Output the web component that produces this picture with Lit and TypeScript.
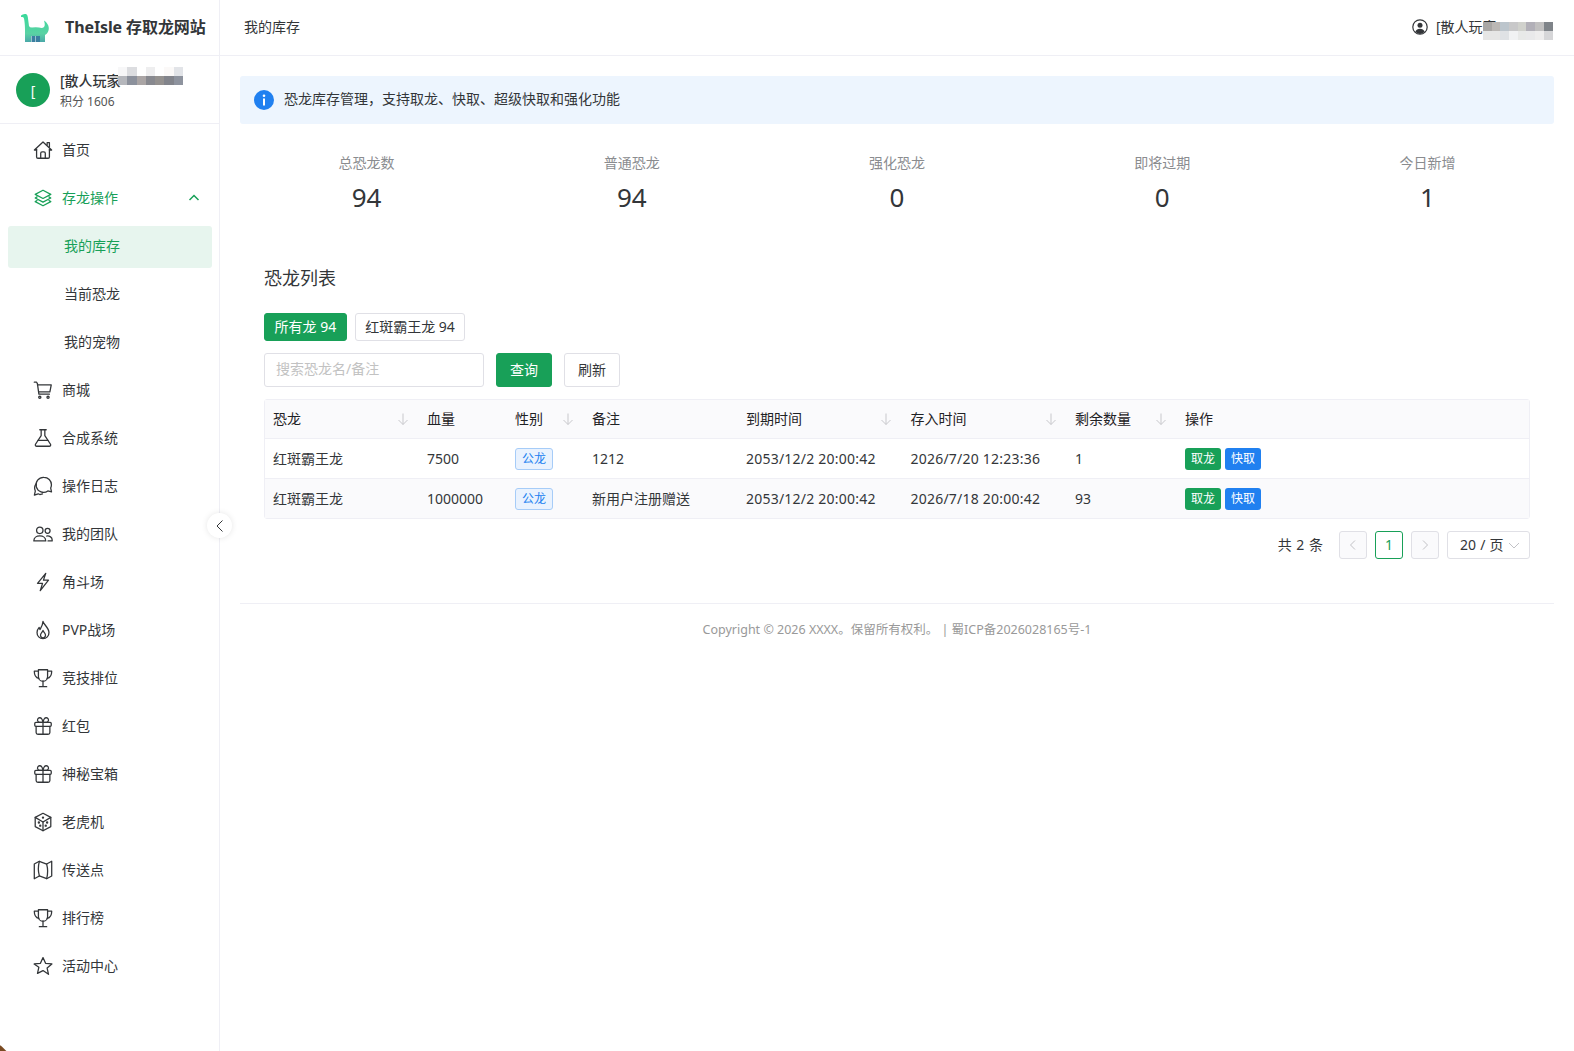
import { html, svg, css, LitElement } from "lit";
import { customElement } from "lit/decorators.js";
import { classMap } from "lit/directives/class-map.js";

const icons: Record<string, unknown> = {
  home: svg`<path d="M5 12H2.6L12 3.2l9.4 8.8H19"/><path d="M5 11v8.500A1.500 1.500 0 0 0 6.500 21h11a1.500 1.500 0 0 0 1.500-1.500V11"/><path d="M9.500 21v-5.500a1.500 1.500 0 0 1 1.500-1.500h2a1.500 1.500 0 0 1 1.500 1.500V21"/><path d="M16.500 6.500V4H19v4.800"/>`,
  layers: svg`<path d="M12 3.500 20.500 8 12 12.500 3.500 8Z"/><path d="M5.500 10.800 3.500 12l8.500 4.500 8.500-4.500-2-1.200"/><path d="M5.500 14.800 3.500 16l8.500 4.500 8.500-4.500-2-1.200"/>`,
  cart: svg`<path d="M2.500 3.500H5l.9 1.500L7.500 16.500h11.500"/><path d="M6 6.500h15l-1.500 7.500H7.200"/><circle cx="8.500" cy="20" r="1.200"/><circle cx="17.500" cy="20" r="1.200"/>`,
  flask: svg`<path d="M8.500 3h7"/><path d="M10 3v6.500L3.800 18.800A1.500 1.500 0 0 0 5.100 21h13.800a1.500 1.500 0 0 0 1.300-2.200L14 9.500V3"/><path d="M6.500 14.500h11"/>`,
  chat: svg`<path d="M13 2.500a8.200 8.200 0 0 1 8.200 8.200c0 1.300-.3 2.500-.8 3.600l.9 4-4-.9A8.200 8.200 0 1 1 13 2.500Z"/><path d="M4.700 9.500C3 11.500 2.500 15 3.600 17.500l-1 4.500 4.200-1.500 1.700.8 3-.8"/>`,
  people: svg`<circle cx="8.500" cy="8" r="3.500"/><circle cx="17" cy="8.500" r="2.700"/><path d="M2 19.500c0-3.500 3-5.500 6.500-5.500s6.500 2 6.500 5.500Z"/><path d="M16 14.200c3.300-.3 6 1.400 6 4.300v1h-4.500"/>`,
  flash: svg`<path d="M15 2.500 6 13.500h5.500L9 21.500l9-11.500h-5.500Z"/>`,
  flame: svg`<path d="M12 2.500c.5 3.500 6.500 7 6.500 12.200A6.500 6.500 0 0 1 12 21.500a6.500 6.500 0 0 1-6.500-6.800c0-2.500 1-4 2.300-5.500l.9 2.300c1-2 3-4.500 3.300-9Z"/><path d="M12 12.500c.5 1.800 2.700 3 2.700 5A2.700 2.700 0 0 1 12 20.500a2.700 2.700 0 0 1-2.700-3c0-2 2.200-3.200 2.700-5Z"/>`,
  trophy: svg`<path d="M7 3h10v7.500a5 5 0 0 1-10 0Z"/><path d="M7 4.500H2.500c0 4 1.500 7 5 8"/><path d="M17 4.500h4.500c0 4-1.500 7-5 8"/><path d="M12 15.500V21"/><path d="M8 21.500h8"/>`,
  gift: svg`<rect x="3" y="8" width="18" height="4.500" rx="1.200"/><path d="M4.500 12.500V19a2 2 0 0 0 2 2h11a2 2 0 0 0 2-2v-6.500"/><path d="M12 8v13"/><path d="M12 8H8.500a2.500 2.500 0 1 1 2-4c.8 1 1.500 4 1.500 4Zm0 0h3.500a2.500 2.500 0 1 0-2-4c-.8 1-1.500 4-1.500 4Z"/>`,
  cube: svg`<path d="M12 2.500 20.500 7v10L12 21.500 3.500 17V7Z"/><path d="M3.500 7 12 12l8.500-5"/><path d="M12 12v9.500"/><circle cx="12" cy="7.200" r=".6"/><circle cx="7.500" cy="12.500" r=".6"/><circle cx="9" cy="16" r=".6"/><circle cx="16.500" cy="12.500" r=".6"/><circle cx="15" cy="16" r=".6"/>`,
  map: svg`<path d="M2.500 5.500 8 2.500l8 3 5.500-3v16L16 21.500l-8-3-5.500 3Z"/><path d="M8 2.500c-1.200 4.500-1.200 11.500 0 16"/><path d="M16 5.500c1.200 4.500 1.200 11.500 0 16"/>`,
  star: svg`<path d="M12 2.800l2.800 6.300 6.900.7-5.200 4.500 1.500 6.800L12 17l-6 3.100 1.500-6.800L2.300 9.800l6.900-.7Z"/>`,
};

type MenuItem = { label: string; icon?: string; active?: boolean; open?: boolean; sub?: boolean; current?: boolean };

const menu: MenuItem[] = [
  { label: "首页", icon: "home" },
  { label: "存龙操作", icon: "layers", active: true, open: true },
  { label: "我的库存", sub: true, current: true },
  { label: "当前恐龙", sub: true },
  { label: "我的宠物", sub: true },
  { label: "商城", icon: "cart" },
  { label: "合成系统", icon: "flask" },
  { label: "操作日志", icon: "chat" },
  { label: "我的团队", icon: "people" },
  { label: "角斗场", icon: "flash" },
  { label: "PVP战场", icon: "flame" },
  { label: "竞技排位", icon: "trophy" },
  { label: "红包", icon: "gift" },
  { label: "神秘宝箱", icon: "gift" },
  { label: "老虎机", icon: "cube" },
  { label: "传送点", icon: "map" },
  { label: "排行榜", icon: "trophy" },
  { label: "活动中心", icon: "star" },
];

const stats = [
  ["总恐龙数", "94"],
  ["普通恐龙", "94"],
  ["强化恐龙", "0"],
  ["即将过期", "0"],
  ["今日新增", "1"],
];

const columns = [
  { label: "恐龙", sort: true },
  { label: "血量" },
  { label: "性别", sort: true },
  { label: "备注" },
  { label: "到期时间", sort: true },
  { label: "存入时间", sort: true },
  { label: "剩余数量", sort: true },
  { label: "操作" },
];

const rows = [
  ["红斑霸王龙", "7500", "1212", "2053/12/2 20:00:42", "2026/7/20 12:23:36", "1"],
  ["红斑霸王龙", "1000000", "新用户注册赠送", "2053/12/2 20:00:42", "2026/7/18 20:00:42", "93"],
];

// pixelated name blur, two rows of blocks
const blurSide = [
  ["#f7f7f8", "#dcdde0", "#ffffff", "#eeeeef", "#ffffff", "#fbf9f8", "#e2e4e8"],
  ["#b5b7bc", "#8c919c", "#aaa5a5", "#88898f", "#94918f", "#82848b", "#8e939e"],
];
const blurTop = [
  ["#a9a7a5", "#bbb8b5", "#bcc5cc", "#c8c8c9", "#d0d1cc", "#b2b0b8", "#c1c0c0", "#7f8489"],
  ["#e6e6e5", "#e6e6e5", "#dfe2e5", "#f1f2f3", "#e8e9e8", "#e9e9ea", "#eeeded", "#d6d6d8"],
];

@customElement("app-root")
export class AppRoot extends LitElement {
  static styles = css`
    :host {
      display: block;
      height: 1051px;
      overflow: hidden;
      position: relative;
      background: #fff;
      color: #333639;
      font-family: "Noto Sans", "Noto Sans CJK SC", sans-serif;
      font-size: 14px;
      line-height: 1.5;
    }
    .layout {
      display: flex;
      height: 100%;
    }
    .side {
      width: 219px;
      flex: none;
      border-right: 1px solid #efeff5;
      position: relative;
    }
    .brand {
      height: 56px;
      box-sizing: border-box;
      border-bottom: 1px solid #efeff5;
      display: flex;
      align-items: center;
      padding-left: 20px;
      gap: 15px;
    }
    .brand svg {
      width: 30px;
      height: 30px;
      flex: none;
    }
    .brand b {
      font-size: 16px;
      font-weight: 700;
      white-space: nowrap;
      letter-spacing: -0.1px;
      padding-bottom: 2px;
    }
    .user {
      height: 67px;
      box-sizing: border-box;
      border-bottom: 1px solid #efeff5;
      display: flex;
      align-items: center;
      padding-left: 16px;
      gap: 10px;
      margin-top: 1px;
    }
    .avatar {
      width: 34px;
      height: 34px;
      border-radius: 50%;
      background: #18a058;
      color: #fff;
      display: flex;
      align-items: center;
      justify-content: center;
      flex: none;
    }
    .user .text {
      padding-top: 2px;
    }
    .user .name {
      font-weight: 500;
      line-height: 20px;
      white-space: nowrap;
    }
    .user .points {
      font-size: 12px;
      line-height: 20px;
      margin-top: 1px;
      color: #555;
    }
    .mosaic {
      position: absolute;
      display: grid;
      grid-auto-rows: 9px;
    }
    .mosaic span {
      display: block;
    }
    .mosaic.side-blur {
      left: 118px;
      top: 67px;
      grid-template-columns: repeat(7, 9.3px);
    }
    .mosaic.top-blur {
      left: 1483px;
      top: 22px;
      grid-template-columns: repeat(8, 8.7px);
    }
    .menu {
      padding: 3px 7px 0 8px;
    }
    .item {
      height: 48px;
      display: flex;
      align-items: center;
      padding-left: 24px;
      padding-bottom: 2px;
      gap: 8px;
      box-sizing: border-box;
      color: #333639;
      position: relative;
    }
    .item svg.ic {
      width: 22px;
      height: 22px;
      fill: none;
      stroke: #333639;
      stroke-width: 1.400;
      stroke-linejoin: round;
      stroke-linecap: round;
      flex: none;
    }
    .item.active {
      color: #18a058;
    }
    .item.active svg {
      stroke: #18a058;
    }
    .item.sub {
      padding-left: 56px;
    }
    .item.current {
      color: #18a058;
    }
    .item.current::before {
      content: "";
      position: absolute;
      inset: 3px 0;
      background: #e7f5ee;
      border-radius: 3px;
    }
    .item span {
      position: relative;
      padding-bottom: 2px;
    }
    .item .chev {
      position: absolute;
      right: 12px;
      width: 12px;
      height: 12px;
      fill: none;
      stroke: #18a058;
      stroke-width: 1.500;
    }
    .collapse {
      position: absolute;
      left: 207px;
      top: 513px;
      width: 25px;
      height: 25px;
      border-radius: 50%;
      background: #fff;
      box-shadow: 0 0 6px rgba(0, 0, 0, 0.1);
      display: flex;
      align-items: center;
      justify-content: center;
      z-index: 2;
    }
    .collapse svg {
      width: 14px;
      height: 14px;
      fill: none;
      stroke: #333639;
      stroke-width: 1;
    }
    .main {
      flex: 1;
      min-width: 0;
    }
    .top {
      height: 56px;
      box-sizing: border-box;
      border-bottom: 1px solid #efeff5;
      display: flex;
      align-items: center;
      justify-content: space-between;
      padding: 0 20px 1px 24px;
    }
    .top > span {
      padding-bottom: 2px;
    }
    .top .who {
      display: flex;
      align-items: center;
      gap: 8px;
      width: 142px;
    }
    .top .who span {
      white-space: nowrap;
      padding-bottom: 1px;
    }
    .top .who svg {
      width: 16px;
      height: 16px;
      flex: none;
    }
    .content {
      padding: 20px 20px 0;
    }
    .alert {
      height: 48px;
      background: #edf5fe;
      border-radius: 3px;
      display: flex;
      align-items: center;
      padding-left: 14px;
      gap: 10px;
    }
    .alert span {
      padding-bottom: 3px;
    }
    .alert svg {
      width: 20px;
      height: 20px;
      flex: none;
    }
    .stats {
      display: grid;
      grid-template-columns: repeat(5, 1fr);
      gap: 12px;
      margin-top: 26px;
      text-align: center;
    }
    .stats .label {
      color: #8a8c8f;
      line-height: 26px;
    }
    .stats .value {
      font-size: 26px;
      line-height: 43px;
    }
    .card {
      padding: 0 24px;
      margin-top: 46px;
    }
    h2 {
      margin: 0;
      font-size: 18px;
      font-weight: 400;
      line-height: 26px;
    }
    .tabs {
      display: flex;
      gap: 8px;
      margin-top: 22px;
    }
    .tab {
      height: 28px;
      box-sizing: border-box;
      padding: 0 9.5px 2px;
      border: 1px solid #e0e0e6;
      border-radius: 3px;
      display: flex;
      align-items: center;
    }
    .tab.on {
      background: #18a058;
      border-color: #18a058;
      color: #fff;
    }
    .filters {
      display: flex;
      gap: 12px;
      margin-top: 12px;
    }
    .search {
      width: 220px;
      height: 34px;
      box-sizing: border-box;
      border: 1px solid #e0e0e6;
      border-radius: 3px;
      padding: 0 11px 4px;
      display: flex;
      align-items: center;
      color: #c2c2c2;
    }
    .btn {
      width: 56px;
      height: 34px;
      box-sizing: border-box;
      border: 1px solid #e0e0e6;
      border-radius: 3px;
      padding-bottom: 2px;
      display: flex;
      align-items: center;
      justify-content: center;
    }
    .btn.primary {
      background: #18a058;
      border-color: #18a058;
      color: #fff;
    }
    .table {
      margin-top: 12px;
      border: 1px solid #efeff5;
      border-radius: 3px;
    }
    .row {
      display: grid;
      grid-template-columns: 154px 88px 77px 154px 164.5px 164.5px 110px 1fr;
      height: 40px;
      box-sizing: border-box;
      border-bottom: 1px solid #efeff5;
      align-items: center;
    }
    .row:last-child {
      height: 39px;
      border-bottom: 0;
    }
    .row.head {
      height: 39px;
      background: #fafafc;
      color: #1f2225;
    }
    .row.head span {
      padding-bottom: 1px;
    }
    .row.striped {
      background: #fafafc;
    }
    .cell {
      padding: 0 8px;
      white-space: nowrap;
      display: flex;
      align-items: center;
      justify-content: space-between;
    }
    .num {
      letter-spacing: 0.22px;
    }
    .sort {
      width: 14px;
      height: 14px;
      fill: none;
      stroke: #c8c8cc;
      stroke-width: 1;
      margin-right: 1.5px;
    }
    .tag {
      width: 38px;
      height: 22px;
      box-sizing: border-box;
      border: 1px solid #a6ccf8;
      background: #e9f2fe;
      border-radius: 3px;
      font-size: 12px;
      color: #2080f0;
      display: flex;
      align-items: center;
      justify-content: center;
    }
    .ops {
      display: flex;
      gap: 4px;
      justify-content: flex-start;
    }
    .mini {
      width: 36px;
      height: 22px;
      border-radius: 3px;
      font-size: 12px;
      color: #fff;
      display: flex;
      align-items: center;
      justify-content: center;
      background: #18a058;
    }
    .mini.blue {
      background: #2080f0;
    }
    .pager {
      display: flex;
      justify-content: flex-end;
      align-items: center;
      gap: 8px;
      margin-top: 12px;
    }
    .pager .total {
      margin-right: 8px;
      word-spacing: 1px;
      padding-bottom: 2px;
    }
    .pg {
      width: 28px;
      height: 28px;
      box-sizing: border-box;
      border: 1px solid #e0e0e6;
      border-radius: 3px;
      display: flex;
      align-items: center;
      justify-content: center;
    }
    .pg.off {
      background: #fafafc;
    }
    .pg.on {
      border-color: #18a058;
      color: #18a058;
      padding-bottom: 2px;
    }
    .pg svg,
    .size svg {
      width: 14px;
      height: 14px;
      fill: none;
      stroke: #c2c2c6;
      stroke-width: 1;
    }
    .size {
      width: 83px;
      height: 28px;
      box-sizing: border-box;
      border: 1px solid #e0e0e6;
      border-radius: 3px;
      display: flex;
      align-items: center;
      justify-content: space-between;
      padding: 0 8px 0 12px;
      white-space: nowrap;
      word-spacing: 0.5px;
    }
    .size span {
      padding-bottom: 2px;
    }
    .foot {
      margin-top: 44px;
      border-top: 1px solid #efeff5;
      text-align: center;
      font-size: 12.5px;
      color: #999;
      padding-top: 17px;
    }
    .corner {
      position: absolute;
      left: -4.5px;
      bottom: -4.5px;
      width: 9px;
      height: 9px;
      background: #7a4a22;
      transform: rotate(45deg);
    }
  `;

  private mosaic(cls: string, blocks: string[][]) {
    return html`<div class="mosaic ${cls}">
      ${blocks.flat().map((c) => html`<span style="background:${c}"></span>`)}
    </div>`;
  }

  private renderMenu(m: MenuItem) {
    return html`<div
      class=${classMap({ item: true, active: !!m.active, sub: !!m.sub, current: !!m.current })}
    >
      ${m.icon ? html`<svg class="ic" viewBox="0 0 24 24">${icons[m.icon]}</svg>` : ""}
      <span>${m.label}</span>
      ${m.open
        ? html`<svg class="chev" viewBox="0 0 12 12"><path d="M1.500 8 6 3.500 10.500 8" /></svg>`
        : ""}
    </div>`;
  }

  private sortIcon() {
    return html`<svg class="sort" viewBox="0 0 14 14"><path d="M7 1.500v11M2.500 8 7 12.500 11.500 8" /></svg>`;
  }

  render() {
    return html`
      <div class="layout">
        <aside class="side">
          <div class="brand">
            <svg viewBox="0 0 30 30">
              <defs>
                <linearGradient id="dino" x1="0" y1="0" x2="0" y2="1">
                  <stop offset="0" stop-color="#38d99a" />
                  <stop offset="0.7" stop-color="#5ad2a4" />
                  <stop offset="1" stop-color="#4aa8a8" />
                </linearGradient>
              </defs>
              <path
                fill="url(#dino)"
                d="M1 2.500Q3 .5 6 1q1.500.5 1.800 3L9 13q.5 1.500 3 1.500 4-.5 7 0 3.500 1 5-.5 1.500-1.500 0-6.500 4.500 3 4.800 7.500.2 4.500-3.800 7V29h-5v-6h-9v6H5V16Q4.800 9 4 5.500 3.800 4 2.500 4H1Z"
              />
              <path fill="#3a7fa0" d="M11.500 23h4v6h-4ZM16 23h4v6h-4Z" />
            </svg>
            <b>TheIsle 存取龙网站</b>
          </div>
          <div class="user">
            <div class="avatar">[</div>
            <div class="text">
              <div class="name">[散人玩家</div>
              <div class="points">积分 1606</div>
            </div>
          </div>
          ${this.mosaic("side-blur", blurSide)}
          <nav class="menu">${menu.map((m) => this.renderMenu(m))}</nav>
        </aside>
        <div class="collapse">
          <svg viewBox="0 0 14 14"><path d="M9.500 1.500 4 7l5.500 5.500" /></svg>
        </div>
        <main class="main">
          <header class="top">
            <span>我的库存</span>
            <div class="who">
              <svg viewBox="0 0 16 16">
                <circle cx="8" cy="8" r="7.200" fill="none" stroke="#333639" stroke-width="1.200" />
                <circle cx="8" cy="6.300" r="2.500" fill="#333639" />
                <path fill="#333639" d="M3.300 12.700c.8-1.900 2.600-2.900 4.700-2.900s3.900 1 4.700 2.900A7 7 0 0 1 8 15a7 7 0 0 1-4.700-2.300Z" />
              </svg>
              <span>[散人玩家</span>
            </div>
          </header>
          ${this.mosaic("top-blur", blurTop)}
          <div class="content">
            <div class="alert">
              <svg viewBox="0 0 20 20">
                <circle cx="10" cy="10" r="10" fill="#2080f0" />
                <rect x="9" y="8.500" width="2" height="7" fill="#fff" />
                <circle cx="10" cy="5.800" r="1.300" fill="#fff" />
              </svg>
              <span>恐龙库存管理，支持取龙、快取、超级快取和强化功能</span>
            </div>
            <section class="stats">
              ${stats.map(
                ([label, value]) => html`<div>
                  <div class="label">${label}</div>
                  <div class="value">${value}</div>
                </div>`,
              )}
            </section>
            <section class="card">
              <h2>恐龙列表</h2>
              <div class="tabs">
                <div class="tab on">所有龙 94</div>
                <div class="tab">红斑霸王龙 94</div>
              </div>
              <div class="filters">
                <div class="search">搜索恐龙名/备注</div>
                <div class="btn primary">查询</div>
                <div class="btn">刷新</div>
              </div>
              <div class="table">
                <div class="row head">
                  ${columns.map(
                    (c) => html`<div class="cell">
                      <span>${c.label}</span>${c.sort ? this.sortIcon() : ""}
                    </div>`,
                  )}
                </div>
                ${rows.map(
                  (r, i) => html`<div class=${classMap({ row: true, striped: i === 1 })}>
                    <div class="cell">${r[0]}</div>
                    <div class="cell">${r[1]}</div>
                    <div class="cell"><span class="tag">公龙</span></div>
                    <div class="cell">${r[2]}</div>
                    <div class="cell num">${r[3]}</div>
                    <div class="cell num">${r[4]}</div>
                    <div class="cell">${r[5]}</div>
                    <div class="cell ops">
                      <span class="mini">取龙</span><span class="mini blue">快取</span>
                    </div>
                  </div>`,
                )}
              </div>
              <div class="pager">
                <span class="total">共 2 条</span>
                <div class="pg off">
                  <svg viewBox="0 0 14 14"><path d="M9 2.500 4.500 7 9 11.500" /></svg>
                </div>
                <div class="pg on">1</div>
                <div class="pg off">
                  <svg viewBox="0 0 14 14"><path d="M5 2.500 9.500 7 5 11.500" /></svg>
                </div>
                <div class="size">
                  <span>20 / 页</span>
                  <svg viewBox="0 0 14 14"><path d="M2 5l5 5 5-5" /></svg>
                </div>
              </div>
            </section>
            <footer class="foot">Copyright © 2026 XXXX。保留所有权利。 | 蜀ICP备2026028165号-1</footer>
          </div>
        </main>
      </div>
      <div class="corner"></div>
    `;
  }
}

declare global {
  interface HTMLElementTagNameMap {
    "app-root": AppRoot;
  }
}
